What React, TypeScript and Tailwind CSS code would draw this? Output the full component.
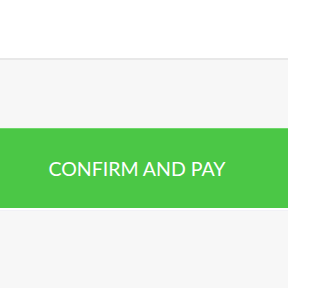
export default function App() {
  return (
    <div className="flex h-[288px] w-[288px] flex-col bg-[#f7f7f7] font-['Lato',sans-serif]">
      {/* header */}
      <div className="h-[60px] border-b-2 border-[#e8e8e8] bg-white"></div>

      {/* pay */}
      <div className="mt-[68px] flex h-[80px] items-center justify-center border-t border-[#6fd86b] bg-[#4bc746] pr-[14px]">
        <span className="text-[19.5px] text-white">CONFIRM AND PAY</span>
      </div>
      <div className="h-[3px] border-b border-[#f1f1f6] bg-white"></div>
    </div>
  );
}
